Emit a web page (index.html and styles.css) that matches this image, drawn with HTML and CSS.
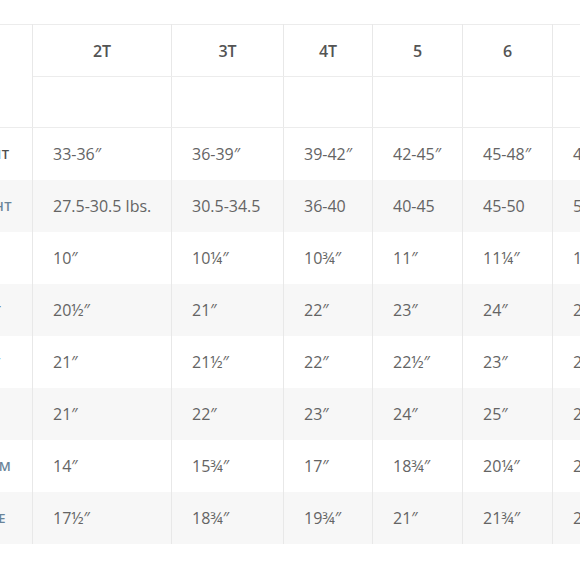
FILE: index.html
```html
<!DOCTYPE html>
<html>
<head>
<meta charset="utf-8">
<link rel="stylesheet" href="styles.css">
</head>
<body>
<div class="wrap">
<table class="chart">
<colgroup>
<col class="c-label"><col class="c-2t"><col class="c-3t"><col class="c-4t"><col class="c-5"><col class="c-6"><col class="c-7">
</colgroup>
<thead>
<tr class="h1">
<th class="lab" rowspan="2"></th><th>2T</th><th>3T</th><th>4T</th><th>5</th><th>6</th><th>7</th>
</tr>
<tr class="h2">
<th></th><th></th><th></th><th></th><th></th><th></th>
</tr>
</thead>
<tbody>
<tr><td class="lab first">HEIGHT</td><td>33-36″</td><td>36-39″</td><td>39-42″</td><td>42-45″</td><td>45-48″</td><td>48-51″</td></tr>
<tr class="alt"><td class="lab">WEIGHT</td><td>27.5-30.5 lbs.</td><td>30.5-34.5</td><td>36-40</td><td>40-45</td><td>45-50</td><td>50-55</td></tr>
<tr><td class="lab">NECK</td><td>10″</td><td>10¼″</td><td>10¾″</td><td>11″</td><td>11¼″</td><td>11½″</td></tr>
<tr class="alt"><td class="lab">CHEST</td><td>20½″</td><td>21″</td><td>22″</td><td>23″</td><td>24″</td><td>25″</td></tr>
<tr><td class="lab">WAIST</td><td>21″</td><td>21½″</td><td>22″</td><td>22½″</td><td>23″</td><td>23½″</td></tr>
<tr class="alt"><td class="lab">HIP</td><td>21″</td><td>22″</td><td>23″</td><td>24″</td><td>25″</td><td>26″</td></tr>
<tr><td class="lab">INSEAM</td><td>14″</td><td>15¾″</td><td>17″</td><td>18¾″</td><td>20¼″</td><td>21¾″</td></tr>
<tr class="alt"><td class="lab">SLEEVE</td><td>17½″</td><td>18¾″</td><td>19¾″</td><td>21″</td><td>21¾″</td><td>22½″</td></tr>
</tbody>
</table>
</div>
</body>
</html>
```

FILE: styles.css
```css
html, body {
  margin: 0;
  padding: 0;
  background: #ffffff;
  overflow: hidden;
}
body {
  width: 580px;
  height: 580px;
  font-family: "Open Sans", "DejaVu Sans", sans-serif;
}
.wrap {
  padding-top: 24px;
  overflow: hidden;
  width: 580px;
}
.chart {
  margin-left: -62px;
  border-collapse: collapse;
  table-layout: fixed;
  width: 704px;
}
.c-label { width: 94px; }
.c-2t { width: 139px; }
.c-3t { width: 112px; }
.c-4t { width: 89px; }
.c-5 { width: 90px; }
.c-6 { width: 90px; }
.c-7 { width: 90px; }

.chart th, .chart td {
  padding: 0;
  border-left: 1px solid #e8e8e8;
  border-right: 1px solid #e8e8e8;
}
.chart thead th {
  border-top: 1px solid #ececec;
  border-bottom: 1px solid #ececec;
  font-size: 16px;
  font-weight: 600;
  color: #545454;
  text-align: center;
}
.chart .h1 th { height: 51px; }
.chart .h2 th { height: 50px; }

.chart tbody td {
  height: 52px;
  font-size: 16px;
  color: #646464;
  text-align: left;
  padding-left: 20px;
  white-space: nowrap;
  overflow: hidden;
}
.chart tbody tr.alt td {
  background: #f7f7f7;
}
.chart tbody td.lab {
  font-size: 13px;
  font-weight: 600;
  letter-spacing: 0.5px;
  color: #6a8499;
}
.chart tbody td.lab.first {
  color: #4e4e4e;
}
```
